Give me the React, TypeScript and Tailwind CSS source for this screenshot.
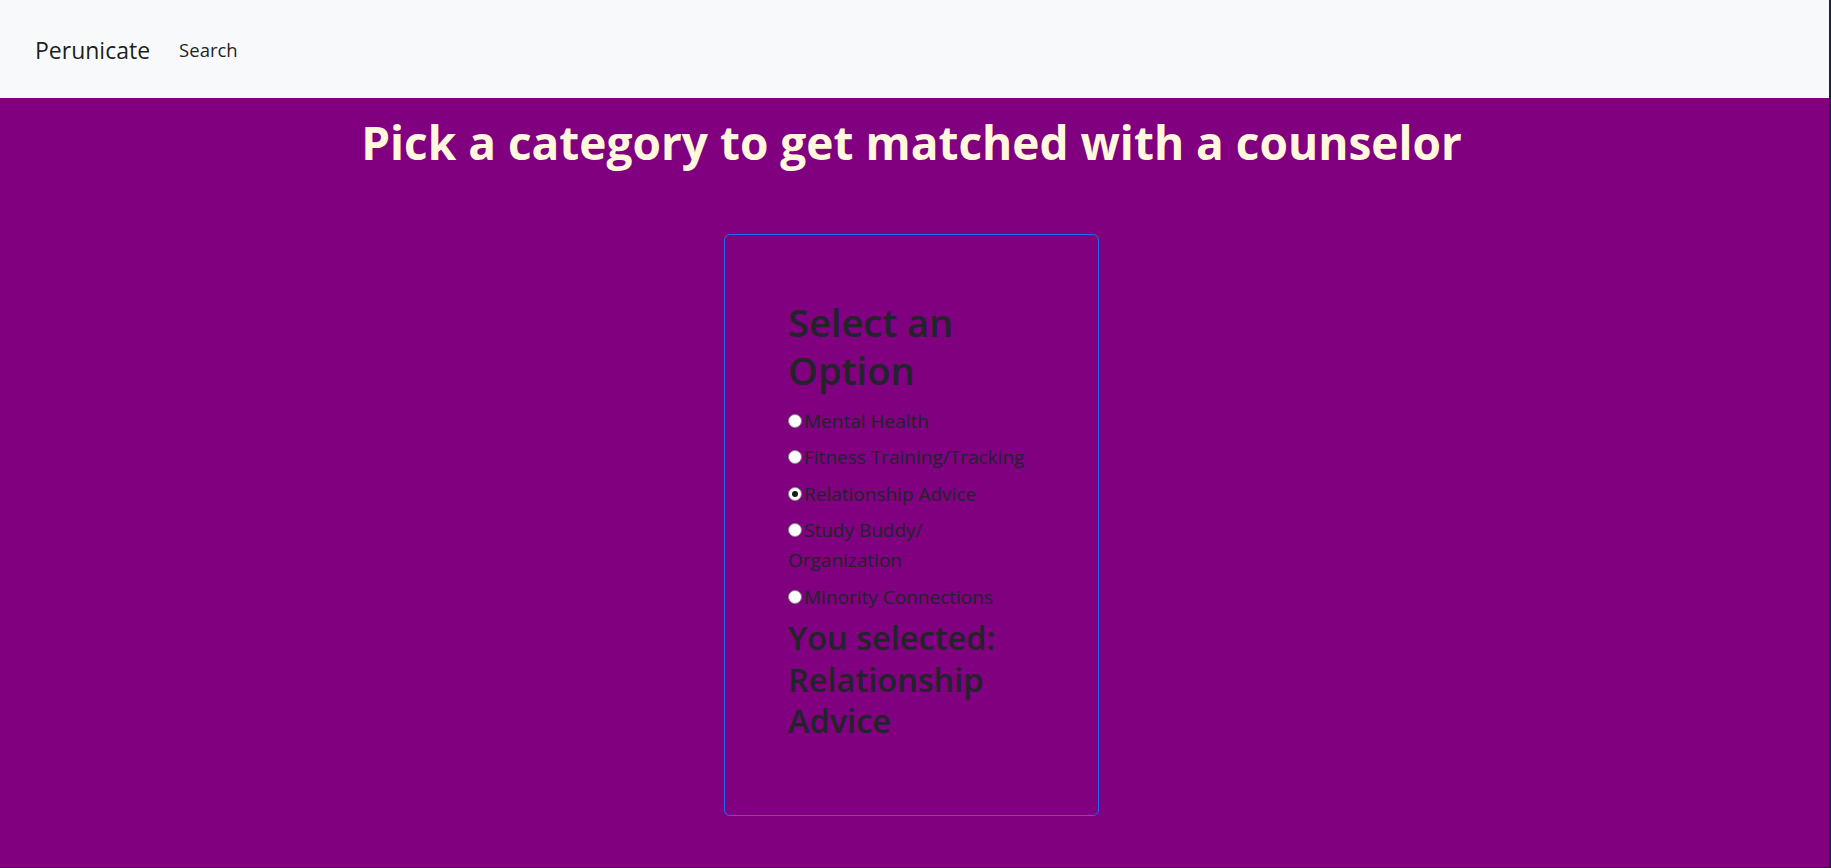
import React from "react";

const FONT = { fontFamily: '"Segoe UI", "Open Sans", "Noto Sans", sans-serif' };

function Radio({ checked }: { checked?: boolean }) {
  return (
    <span className="relative inline-block w-[14px] h-[14px] mr-[2px] rounded-full bg-white border border-[#858585] align-baseline">
      {checked ? (
        <span className="absolute left-[3px] top-[3px] block w-[6px] h-[6px] rounded-full bg-[#1a1a1a]" />
      ) : null}
    </span>
  );
}

export default function App() {
  return (
    <div
      className="h-screen w-full overflow-hidden flex flex-col bg-[#800080] border-r-2 border-b border-[#1f2633]"
      style={FONT}
    >
      <nav className="h-[98px] shrink-0 bg-[#f8f9fa] flex items-center pl-[35px] pt-[1px]">
        <span className="text-[23px] leading-[30px] text-black/90">Perunicate</span>
        <span className="ml-[29px] text-[18.5px] leading-[24px] text-black/90">Search</span>
      </nav>
      <main className="flex-1 flex flex-col items-center pr-[6px]">
        <h1 className="mt-[16px] text-[46px] leading-[57.6px] font-bold text-[#fff8dc] whitespace-nowrap">
          Pick a category to get matched with a counselor
        </h1>
        <div className="mt-[62px] w-[375px] h-[582px] border border-[#1a6dfb] rounded-[6px] pl-[63px] pr-[63px] pt-[63px] text-[#212529]">
          <h2 className="text-[38px] leading-[48px] font-semibold whitespace-nowrap">
            Select an
            <br />
            Option
          </h2>
          <div className="mt-[12px] flex flex-col gap-[6.5px] text-[19px] leading-[30px]">
            <div className="whitespace-nowrap">
              <Radio />
              Mental Health
            </div>
            <div className="whitespace-nowrap">
              <Radio />
              Fitness Training/Tracking
            </div>
            <div className="whitespace-nowrap">
              <Radio checked />
              Relationship Advice
            </div>
            <div className="whitespace-nowrap">
              <Radio />
              Study Buddy/
              <br />
              Organization
            </div>
            <div className="whitespace-nowrap">
              <Radio />
              Minority Connections
            </div>
          </div>
          <h3 className="mt-[5.5px] text-[32.5px] leading-[41.5px] font-semibold whitespace-nowrap">
            You selected:
            <br />
            Relationship
            <br />
            Advice
          </h3>
        </div>
      </main>
    </div>
  );
}
